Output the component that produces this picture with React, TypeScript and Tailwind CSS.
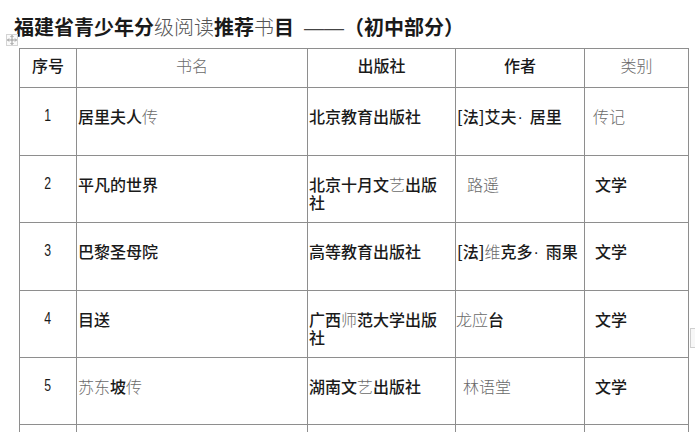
type BookRow = {
    no: string;
    name: string;
    pub: string;
    author: string;
    authorPad: string;
    cat: string;
    catPad: string;
    h: string;
};

// {..} marks the characters that render in the thin grey fallback face
const rows: BookRow[] = [
    { no: '1', name: '居里夫人{传}', pub: '北京教育出版社', author: '[法]艾夫·居里', authorPad: 'pl-[1px]', cat: '{传记}', catPad: 'pl-[8px]', h: 'h-[68px]' },
    { no: '2', name: '平凡的世界', pub: '北京十月文{艺}出版社', author: '{路遥}', authorPad: 'pl-[11px]', cat: '文学', catPad: 'pl-[10px]', h: 'h-[67px]' },
    { no: '3', name: '巴黎圣母院', pub: '高等教育出版社', author: '[法]{维}克多·雨果', authorPad: 'pl-[1px]', cat: '文学', catPad: 'pl-[10px]', h: 'h-[68px]' },
    { no: '4', name: '目送', pub: '广西{师}范大学出版社', author: '{龙应}台', authorPad: 'pl-[0px]', cat: '文学', catPad: 'pl-[10px]', h: 'h-[67px]' },
    { no: '5', name: '{苏东}坡{传}', pub: '湖南文{艺}出版社', author: '{林语堂}', authorPad: 'pl-[7px]', cat: '文学', catPad: 'pl-[10px]', h: 'h-[67px]' },
];

function Rich({ text }: { text: string }) {
    const parts = text.split(/(\{[^}]*\}|·)/);
    return (
        <>
            {parts.map((p, i) => {
                if (p === '·') {
                    return <span key={i} className="pl-[1px] pr-[7px] font-['Liberation_Sans',sans-serif]">·</span>;
                }
                if (p.startsWith('{')) {
                    return <span key={i} className="font-light text-[#6a6a6a]">{p.slice(1, -1)}</span>;
                }
                return <span key={i}>{p}</span>;
            })}
        </>
    );
}

const cell = 'border-r border-b border-[#8e8e8e]';
const gridCols = 'grid grid-cols-[57px_231px_148px_129px_104px]';

export default function App() {
    return (
        <main className="relative h-[432px] w-[695px] overflow-hidden bg-white text-[#1a1a1a] font-['Noto_Sans_CJK_SC',sans-serif]">
            <div className="h-[48px] pl-[14px] pt-[13px] text-[20px] leading-[28px] font-bold whitespace-nowrap">
                福建省青少年分<span className="font-light text-[#555]">级阅读</span>推荐<span className="font-light text-[#555]">书</span>目
                <span className="ml-[10px] font-['Liberation_Sans',sans-serif] font-normal text-[#444]">——</span>
                <span>（初中部分）</span>
            </div>

            {/* table move handle */}
            <div className="absolute left-[6px] top-[34px] flex h-[12px] w-[12px] items-center justify-center border border-[#d4d4d4] bg-[#fafafa]">
                <svg width="10" height="10" viewBox="0 0 10 10" fill="none" stroke="#9a9a9a" strokeWidth="1">
                    <path d="M5 0.5v9M0.5 5h9" />
                    <path d="M3.5 2L5 0.5 6.5 2M3.5 8L5 9.5 6.5 8M2 3.5L0.5 5 2 6.5M8 3.5L9.5 5 8 6.5" />
                </svg>
            </div>

            {/* right edge row marker */}
            <div className="absolute left-[690px] top-[328px] h-[20px] w-[10px] border border-[#cfcfcf] bg-[#f7f7f7]" />

            <div className="ml-[19px] w-[670px] border-l border-t border-[#8e8e8e] text-[16px] leading-[18px] font-medium">
                <div className={gridCols}>
                    <div className={`${cell} h-[39px] pt-[7px] text-center`}>序号</div>
                    <div className={`${cell} h-[39px] pt-[7px] text-center font-light text-[#6a6a6a]`}>书名</div>
                    <div className={`${cell} h-[39px] pt-[7px] text-center`}>出版社</div>
                    <div className={`${cell} h-[39px] pt-[7px] text-center`}>作者</div>
                    <div className={`${cell} h-[39px] pt-[7px] text-center font-light text-[#6a6a6a]`}>类别</div>
                </div>
                {rows.map((r) => (
                    <div key={r.no} className={gridCols}>
                        <div className={`${cell} ${r.h} pt-[19px] text-center font-['Liberation_Sans',sans-serif] font-normal`}>
                            <span className="inline-block scale-x-[0.72] text-[17px]">{r.no}</span>
                        </div>
                        <div className={`${cell} ${r.h} pt-[19px] pl-[1px]`}>
                            <Rich text={r.name} />
                        </div>
                        <div className={`${cell} ${r.h} pt-[19px] pl-[1px] pr-[8px]`}>
                            <Rich text={r.pub} />
                        </div>
                        <div className={`${cell} ${r.h} pt-[19px] ${r.authorPad} whitespace-nowrap`}>
                            <Rich text={r.author} />
                        </div>
                        <div className={`${cell} ${r.h} pt-[19px] ${r.catPad}`}>
                            <Rich text={r.cat} />
                        </div>
                    </div>
                ))}
                <div className={gridCols}>
                    <div className={`${cell} h-[67px]`} />
                    <div className={`${cell} h-[67px]`} />
                    <div className={`${cell} h-[67px]`} />
                    <div className={`${cell} h-[67px]`} />
                    <div className={`${cell} h-[67px]`} />
                </div>
            </div>
        </main>
    );
}
